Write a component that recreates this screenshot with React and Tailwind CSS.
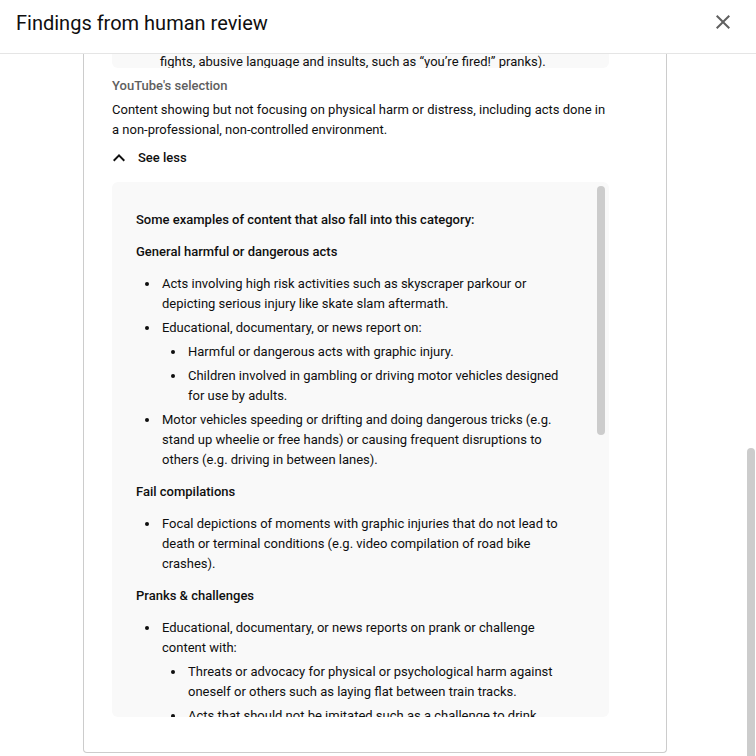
import React from 'react';

const font = { fontFamily: 'Roboto, "Noto Sans", Arial, sans-serif' };

function Li({ children, nested }) {
  return (
    <li className="mt-1 first:mt-0 pl-[2px]">
      {children}
      {nested && (
        <ul className="list-disc pl-[24px] mt-1">
          {nested.map((n) => (
            <li key={n} className="mt-1 first:mt-0 pl-[2px]">{n}</li>
          ))}
        </ul>
      )}
    </li>
  );
}

export default function App() {
  return (
    <div className="h-[756px] w-[756px] bg-white flex flex-col overflow-hidden text-[#0f0f0f]" style={font}>
      <div className="h-[54px] shrink-0 flex items-center justify-between pl-4 pr-[21px] border-b border-[#e5e5e5]">
        <h1 className="text-[20px] leading-7 pb-[8px] text-[#0f0f0f]">Findings from human review</h1>
        <svg viewBox="0 0 24 24" className="w-6 h-6 mb-[10px] fill-[#606060]">
          <path d="M19 6.41 17.59 5 12 10.59 6.41 5 5 6.41 10.59 12 5 17.59 6.41 19 12 13.41 17.59 19 19 17.59 13.41 12z" />
        </svg>
      </div>

      <div className="relative flex-1 overflow-hidden">
        <div className="w-[584px] ml-[83px] border-x border-b border-[#cccccc] rounded-b-[4px] pl-[28px] pb-[35px]">
          <div className="w-[497px] h-[14px] bg-[#f9f9f9] rounded-b-[6px] overflow-hidden">
            <p className="text-[13px] leading-5 pl-[48px] -mt-[2px]">
              fights, abusive language and insults, such as “you’re fired!” pranks).
            </p>
          </div>

          <div className="w-[497px]">
            <p className="mt-[8px] text-[13px] leading-5 font-medium text-[#606060]">YouTube's selection</p>
            <p className="mt-1 text-[13px] leading-5">
              Content showing but not focusing on physical harm or distress, including acts done in a non-professional, non-controlled environment.
            </p>

            <div className="flex items-center mt-[6px] h-6">
              <svg viewBox="0 0 24 24" className="w-6 h-6 -ml-[5px] fill-[#0f0f0f]">
                <path d="M12 8l-6 6 1.41 1.41L12 10.83l4.59 4.58L18 14z" />
              </svg>
              <span className="ml-[7px] text-[13px] font-medium leading-5">See less</span>
            </div>

            <div className="relative mt-[12px] h-[535px] bg-[#f9f9f9] rounded-[6px] overflow-hidden">
              <div className="px-6 pt-[28px] text-[13px] leading-5 pr-[40px]">
                <p className="font-medium">Some examples of content that also fall into this category:</p>

                <p className="mt-3 font-medium">General harmful or dangerous acts</p>
                <ul className="mt-3 list-disc pl-[24px]">
                  <Li>Acts involving high risk activities such as skyscraper parkour or depicting serious injury like skate slam aftermath.</Li>
                  <Li nested={[
                    'Harmful or dangerous acts with graphic injury.',
                    'Children involved in gambling or driving motor vehicles designed for use by adults.',
                  ]}>Educational, documentary, or news report on:</Li>
                  <Li>Motor vehicles speeding or drifting and doing dangerous tricks (e.g. stand up wheelie or free hands) or causing frequent disruptions to others (e.g. driving in between lanes).</Li>
                </ul>

                <p className="mt-3 font-medium">Fail compilations</p>
                <ul className="mt-3 list-disc pl-[24px]">
                  <Li>Focal depictions of moments with graphic injuries that do not lead to death or terminal conditions (e.g. video compilation of road bike crashes).</Li>
                </ul>

                <p className="mt-3 font-medium">Pranks &amp; challenges</p>
                <ul className="mt-3 list-disc pl-[24px]">
                  <Li nested={[
                    'Threats or advocacy for physical or psychological harm against oneself or others such as laying flat between train tracks.',
                    'Acts that should not be imitated such as a challenge to drink excessive amounts of alcohol.',
                  ]}>Educational, documentary, or news reports on prank or challenge content with:</Li>
                </ul>
              </div>
              <div className="absolute top-[4px] right-[4px] w-2 h-[249px] rounded-full bg-[#cccccc]" />
            </div>
          </div>
        </div>
        <div className="absolute right-[1px] top-[394px] w-2 h-[320px] rounded-t-full bg-[#cccccc]" />
      </div>
    </div>
  );
}
